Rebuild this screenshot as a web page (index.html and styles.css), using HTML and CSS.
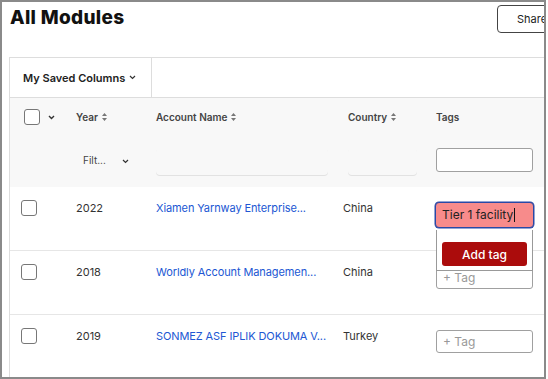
FILE: index.html
```html
<!DOCTYPE html>
<html lang="en">
<head>
  <meta charset="UTF-8" />
  <meta name="viewport" content="width=device-width, initial-scale=1" />
  <title>All Modules</title>
  <link rel="stylesheet" href="styles.css">
</head>
<body>

  <div class="frame">
    <header class="page-header">
      <h1>All Modules</h1>
      <button class="btn-share" type="button">Share</button>
    </header>

    <div class="card">
      <div class="toolbar">
        <div class="saved-columns">
          My Saved Columns
          <svg class="chev" width="7" height="5" viewBox="0 0 7 5"><path d="M1 1l2.5 2.5L6 1" fill="none" stroke="#333" stroke-width="1.2"/></svg>
        </div>
      </div>

      <div class="table-head">
        <div class="row head-row">
          <div class="cell cell-check head-check">
            <span class="checkbox"></span>
            <svg class="chev" width="7" height="5" viewBox="0 0 7 5"><path d="M1 1l2.5 2.5L6 1" fill="none" stroke="#333" stroke-width="1.4"/></svg>
          </div>
          <div class="cell">Year <svg class="sort" width="5" height="8" viewBox="0 0 5 8"><path d="M2.5 0L5 3H0z M2.5 8L5 5H0z" fill="#777"/></svg></div>
          <div class="cell">Account Name <svg class="sort" width="5" height="8" viewBox="0 0 5 8"><path d="M2.5 0L5 3H0z M2.5 8L5 5H0z" fill="#777"/></svg></div>
          <div class="cell">Country <svg class="sort" width="5" height="8" viewBox="0 0 5 8"><path d="M2.5 0L5 3H0z M2.5 8L5 5H0z" fill="#777"/></svg></div>
          <div class="cell">Tags</div>
        </div>
        <div class="row filter-row">
          <div class="cell"></div>
          <div class="cell">
            <div class="filter-select">
              <span>Filt...</span>
              <svg width="7" height="5" viewBox="0 0 7 5"><path d="M1 1l2.5 2.5L6 1" fill="none" stroke="#333" stroke-width="1.2"/></svg>
            </div>
          </div>
          <div class="cell"><div class="filter-input account-filter"></div></div>
          <div class="cell"><div class="filter-input country-filter"></div></div>
          <div class="cell"><div class="tag-input tag-filter"></div></div>
        </div>
      </div>

      <div class="row body-row">
        <div class="cell cell-check"><span class="checkbox"></span></div>
        <div class="cell">2022</div>
        <div class="cell"><a class="account-link" href="#">Xiamen Yarnway Enterprise...</a></div>
        <div class="cell cell-country">China</div>
        <div class="cell cell-tags">
          <div class="tag-input is-focused">Tier 1 facility<span class="caret"></span></div>
          <div class="tag-dropdown">
            <button class="btn-add-tag" type="button">Add tag</button>
          </div>
        </div>
      </div>

      <div class="row body-row">
        <div class="cell cell-check"><span class="checkbox"></span></div>
        <div class="cell">2018</div>
        <div class="cell"><a class="account-link" href="#">Worldly Account Managemen...</a></div>
        <div class="cell cell-country">China</div>
        <div class="cell cell-tags">
          <div class="tag-input placeholder">+ Tag</div>
        </div>
      </div>

      <div class="row body-row">
        <div class="cell cell-check"><span class="checkbox"></span></div>
        <div class="cell">2019</div>
        <div class="cell"><a class="account-link" href="#">SONMEZ ASF IPLIK DOKUMA V...</a></div>
        <div class="cell cell-country">Turkey</div>
        <div class="cell cell-tags">
          <div class="tag-input placeholder">+ Tag</div>
        </div>
      </div>
    </div>
  </div>

</body>
</html>
```

FILE: styles.css
```css
body {
  margin: 0;
  background-color: white;
  font-family: Inter, "Noto Sans", sans-serif;
  color: #333;
}

.frame {
  width: 546px;
  height: 379px;
  box-sizing: border-box;
  border: 2px solid #8a8a8a;
  overflow: hidden;
  position: relative;
}

.page-header {
  height: 55px;
  display: flex;
  justify-content: space-between;
  align-items: flex-start;
}

h1 {
  margin: 0;
  padding: 5px 0 0 8px;
  font-size: 19px;
  line-height: 22px;
  font-weight: 800;
  color: #111;
  letter-spacing: 0.3px;
}

.btn-share {
  margin-top: 3px;
  margin-right: -23px;
  height: 28px;
  width: 70px;
  padding: 0 0 0 19px;
  text-align: left;
  background: white;
  border: 1px solid #444;
  border-radius: 4px;
  font-family: inherit;
  font-size: 11px;
  color: #222;
}

.card {
  margin-left: 7px;
  border-left: 1px solid #ddd;
  border-top: 1px solid #ddd;
}

.toolbar {
  height: 39px;
  display: flex;
  border-bottom: 1px solid #ddd;
}

.saved-columns {
  width: 128px;
  padding-left: 13px;
  border-right: 1px solid #ddd;
  display: flex;
  align-items: center;
  gap: 4px;
  font-size: 11px;
  font-weight: 600;
  color: #222;
}

.row {
  display: grid;
  grid-template-columns: 60px 80px 192px 88px 116px;
}

.cell {
  padding-left: 6px;
  display: flex;
  align-items: center;
}

.table-head {
  background-color: #f8f8f8;
}

.head-row {
  height: 38px;
}

.head-row .cell {
  font-size: 10px;
  font-weight: 600;
  color: #444;
  gap: 4px;
}

.head-check {
  padding-left: 14px;
}

.head-check .chev {
  margin-left: 4px;
}

.sort {
  flex-shrink: 0;
}

.filter-row {
  height: 51px;
}

.filter-row .cell {
  align-items: flex-start;
  padding-top: 12px;
}

.filter-select {
  width: 58px;
  height: 24px;
  box-sizing: border-box;
  padding: 0 5px 0 7px;
  display: flex;
  justify-content: space-between;
  align-items: center;
  font-size: 10px;
  color: #444;
}

.filter-select svg {
  margin-top: 2px;
}

.filter-input {
  height: 27px;
  border-radius: 4px;
  background-color: #f8f8f8;
  box-shadow: 0 1px 0 #e2e2e2;
}

.account-filter {
  width: 172px;
}

.country-filter {
  width: 69px;
}

.tag-input {
  width: 97px;
  height: 23px;
  box-sizing: border-box;
  border: 1px solid #a0a0a0;
  border-radius: 3px;
  background-color: white;
  padding-left: 6px;
  display: flex;
  align-items: center;
  font-size: 12px;
}

.tag-filter {
  height: 24px;
}

.body-row {
  min-height: 63px;
  border-bottom: 1px solid #e6e6e6;
}

.body-row .cell {
  align-items: flex-start;
  padding-top: 13px;
  font-size: 11px;
  line-height: 16px;
  color: #333;
}

.body-row .cell-check {
  padding-left: 11px;
}

.body-row .cell-country {
  padding-left: 1px;
}

.cell-tags {
  flex-direction: column;
  position: relative;
}

.body-row .cell-tags .tag-input {
  margin-top: 2px;
}

.checkbox {
  display: block;
  width: 16px;
  height: 16px;
  box-sizing: border-box;
  border: 1px solid #777;
  border-radius: 3px;
  background-color: white;
  flex-shrink: 0;
}

.account-link {
  color: #2157d3;
  text-decoration: none;
  white-space: nowrap;
  letter-spacing: -0.1px;
}

.placeholder {
  color: #999;
}

.tag-input.is-focused {
  width: 99px;
  height: 26px;
  margin-left: -1px;
  border: 1px solid #2848a6;
  border-radius: 4px;
  box-shadow: 0 0 0 0.5px #2848a6;
  background-color: #f78b8b;
  color: #222;
}

.caret {
  display: inline-block;
  width: 1px;
  height: 14px;
  background-color: #111;
  margin-left: 1px;
}

.tag-dropdown {
  position: absolute;
  top: 43px;
  left: 6px;
  width: 97px;
  box-sizing: border-box;
  padding: 12px 5px 4px 5px;
  border: 1px solid #999;
  border-top: none;
  background-color: white;
  z-index: 2;
}

.btn-add-tag {
  display: block;
  width: 85px;
  height: 24px;
  border: none;
  border-radius: 3px;
  background-color: #ab0c0c;
  color: white;
  font-family: inherit;
  font-size: 12px;
  font-weight: 500;
}
```
